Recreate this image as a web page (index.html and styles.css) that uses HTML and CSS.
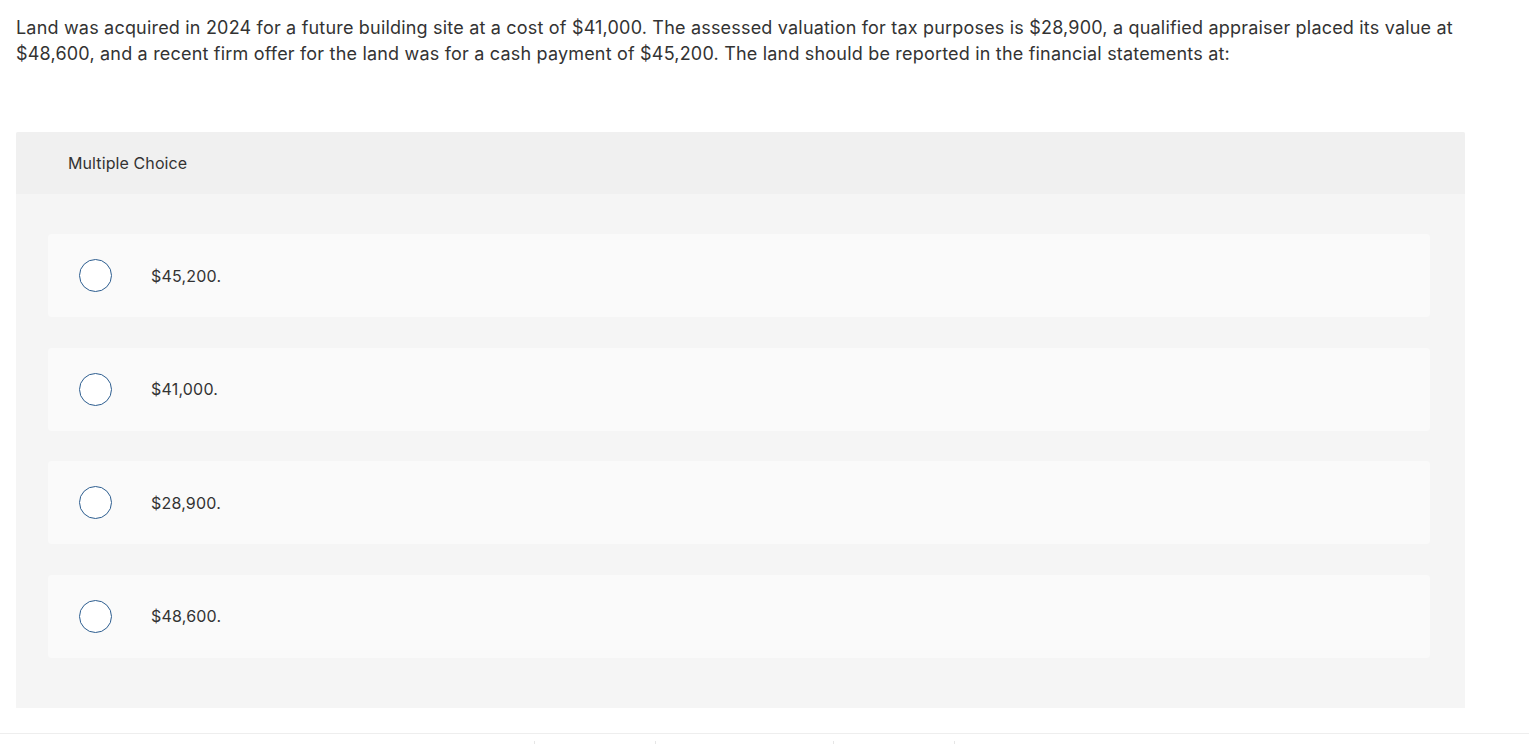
FILE: index.html
```html
<!DOCTYPE html>
<html>
<head>
<meta charset="utf-8">
<link rel="stylesheet" href="styles.css">
</head>
<body>
<div class="page">
  <p class="question">Land was acquired in 2024 for a future building site at a cost of $41,000. The assessed valuation for tax purposes is $28,900, a qualified appraiser placed its value at $48,600, and a recent firm offer for the land was for a cash payment of $45,200. The land should be reported in the financial statements at:</p>
  <section class="mc">
    <div class="mc-head">Multiple Choice</div>
    <div class="mc-body">
      <label class="opt"><span class="radio"></span><span class="opt-text">$45,200.</span></label>
      <label class="opt"><span class="radio"></span><span class="opt-text">$41,000.</span></label>
      <label class="opt"><span class="radio"></span><span class="opt-text">$28,900.</span></label>
      <label class="opt"><span class="radio"></span><span class="opt-text">$48,600.</span></label>
    </div>
  </section>
</div>
<footer class="foot">
  <span class="tick t1"></span><span class="tick t2"></span><span class="tick t3"></span><span class="tick t4"></span>
</footer>
</body>
</html>
```
FILE: styles.css
```css
html, body {
  margin: 0;
  padding: 0;
  background: #fff;
}
body {
  font-family: "Inter", "Lato", sans-serif;
  color: #333;
  width: 1529px;
  height: 744px;
  overflow: hidden;
}
.page {
  padding: 15px 64px 0 16px;
}
.question {
  margin: 0;
  font-size: 18px;
  letter-spacing: 0.19px;
  line-height: 26px;
  color: #333;
}
.mc {
  margin-top: 65px;
  width: 1449px;
  background: #f5f5f5;
  border-radius: 2px 2px 0 0;
}
.mc-head {
  background: #f0f0f0;
  height: 62px;
  display: flex;
  align-items: center;
  padding-left: 52px;
  font-size: 16px;
  letter-spacing: 0.1px;
  color: #333;
  border-radius: 2px 2px 0 0;
}
.mc-body {
  padding: 40px 35px 50.5px 32px;
  display: flex;
  flex-direction: column;
  gap: 30.5px;
}
.opt {
  height: 83px;
  background: #fafafa;
  border-radius: 4px;
  display: flex;
  align-items: center;
  padding-left: 31px;
}
.radio {
  width: 31px;
  height: 31px;
  border: 1.5px solid #2c5d8f;
  border-radius: 50%;
  background: #fff;
  flex: none;
}
.opt-text {
  margin-left: 39px;
  font-size: 16px;
  letter-spacing: 0.2px;
  color: #333;
}
.foot {
  position: relative;
  margin-top: 25px;
  border-top: 1px solid #eee;
  height: 12px;
}
.tick {
  position: absolute;
  top: 7px;
  width: 1px;
  height: 4px;
  background: #e6e6e6;
}
.t1 { left: 534px; }
.t2 { left: 655px; }
.t3 { left: 833px; }
.t4 { left: 954px; }
```
